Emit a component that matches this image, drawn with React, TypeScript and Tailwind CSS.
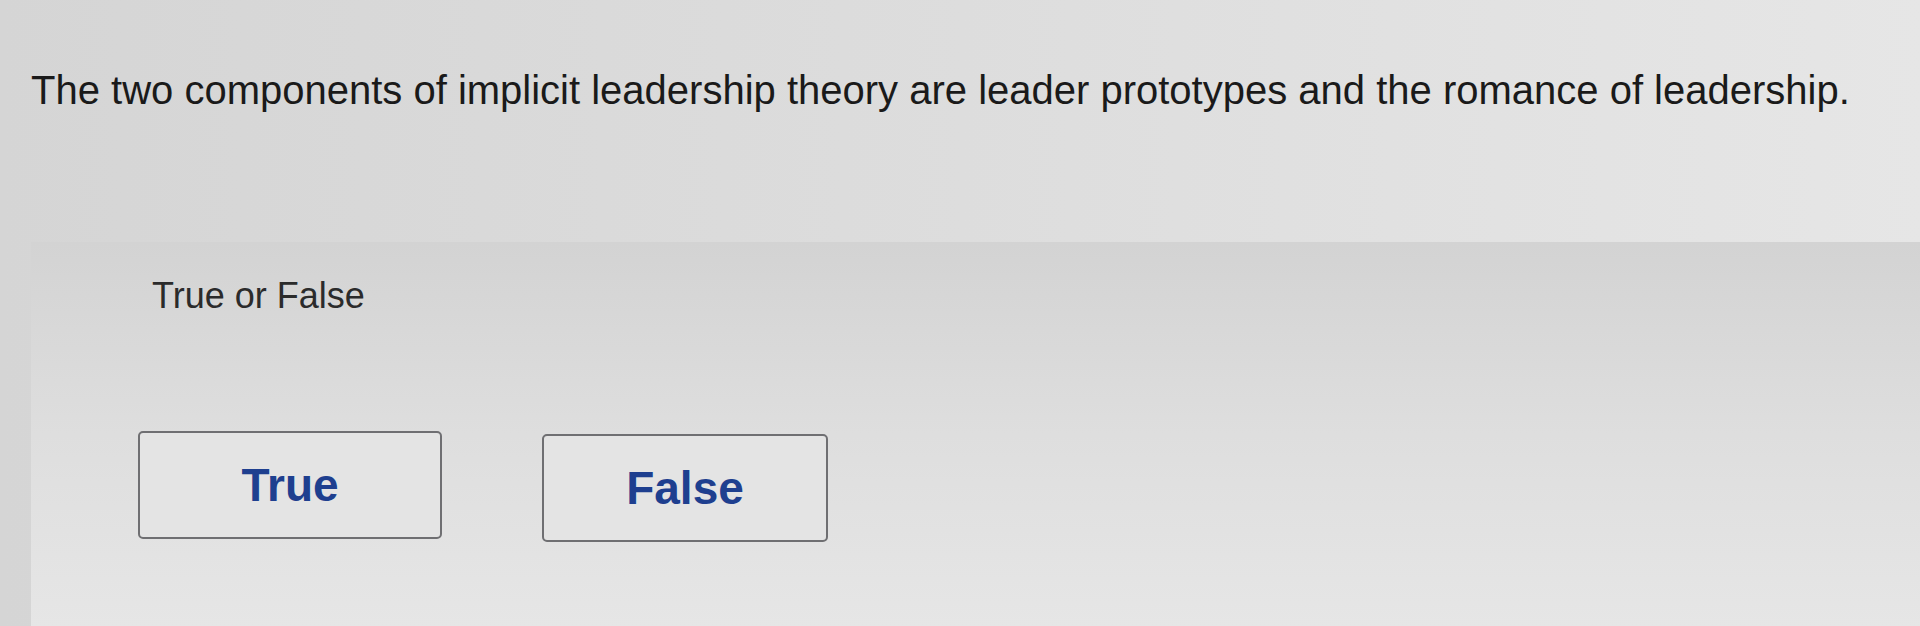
import React from "react";

const QUESTION =
  "The two components of implicit leadership theory are leader prototypes and the romance of leadership.";

const AnswerButton: React.FC<{ label: string; className?: string }> = ({ label, className = "" }) => (
  <button
    type="button"
    className={`h-[108px] rounded-[5px] border-2 border-[#6f6f72] bg-[#e4e4e4] text-[46px] font-bold leading-none text-[#1e3f8f] ${className}`}
  >
    {label}
  </button>
);

export default function App() {
  return (
    <div
      className="flex min-h-[626px] w-[1920px] flex-col overflow-hidden bg-gradient-to-r from-[#d5d5d5] via-[#dddddd] to-[#e6e6e6] text-[#1f1f1f]"
      style={{ fontFamily: '"Liberation Sans", Arial, sans-serif' }}
    >
      {/* question prompt */}
      <h1 className="pl-[31px] pt-[66px] text-[40px] font-normal leading-[48px] text-[#1a1a1a]">
        {QUESTION}
      </h1>

      {/* answer area */}
      <section className="ml-[31px] mt-[128px] flex-1 bg-gradient-to-b from-[#d3d3d3] via-[#dedede] to-[#e6e6e6]">
        <p className="pl-[121px] pt-[34px] text-[36px] leading-[40px] text-[#2b2b2b]">True or False</p>

        <div className="mt-[115px] flex items-start gap-[100px] pl-[107px] pb-[60px]">
          <AnswerButton label="True" className="w-[304px]" />
          <AnswerButton label="False" className="mt-[3px] w-[286px]" />
        </div>
      </section>
    </div>
  );
}
